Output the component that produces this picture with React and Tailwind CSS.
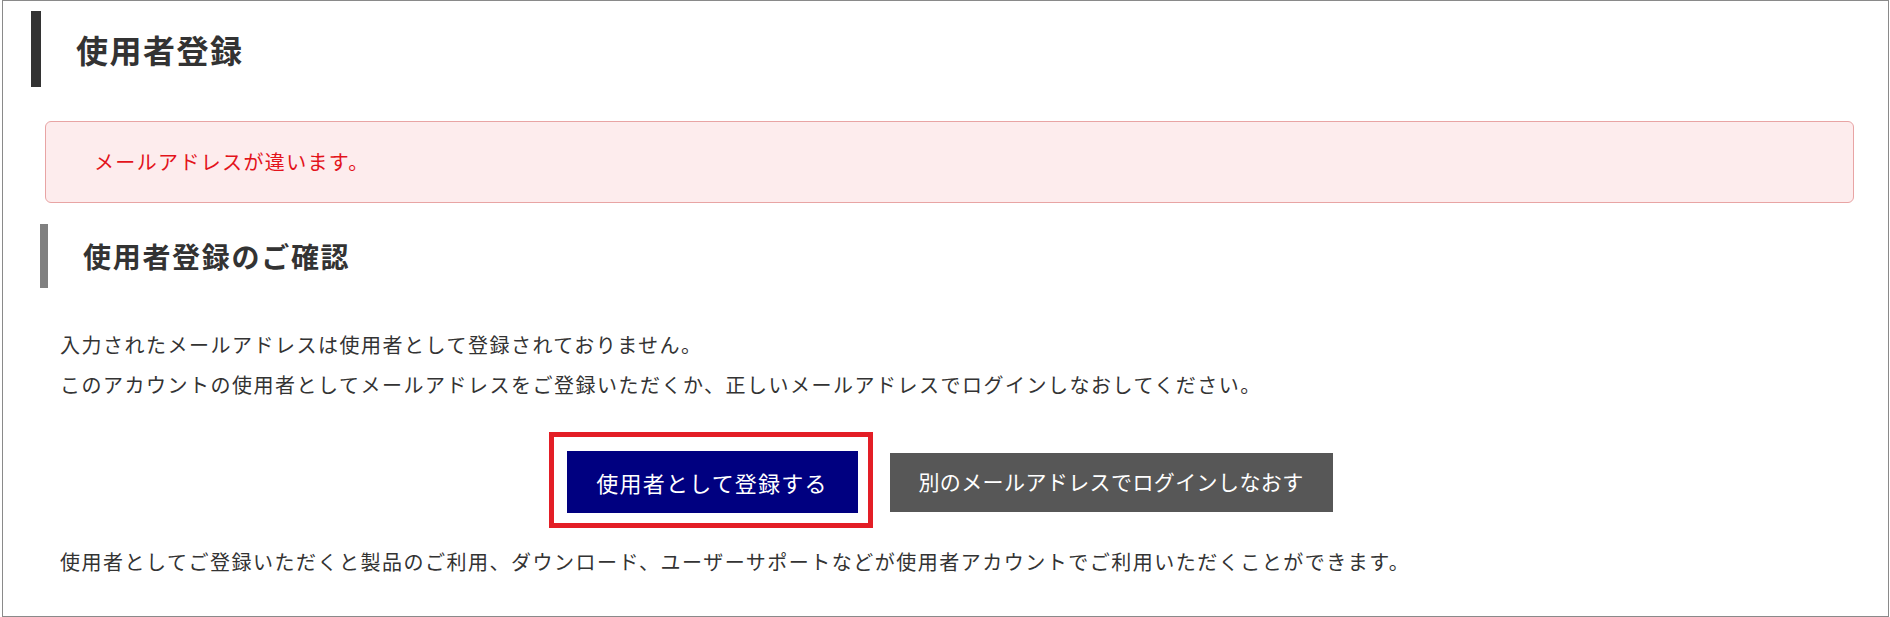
export default function App() {
  const font = { fontFamily: '"Noto Sans CJK JP", "Noto Sans", sans-serif' };
  return (
    <div className="w-[1890px] h-[617px] bg-white" style={font}>
      <div className="ml-[2px] w-[1887px] h-[617px] border border-[#8a8a8a] flex flex-col text-[#333333]">
        {/* H1 */}
        <div className="mt-[10px] ml-[28px] h-[76px] flex items-center border-l-[10px] border-[#333333] pl-[35px]">
          <h1 className="text-[32px] font-bold tracking-[1.5px] leading-none text-[#333333]">使用者登録</h1>
        </div>

        {/* Alert */}
        <div className="mt-[34px] ml-[42px] mr-[34px] h-[82px] flex items-center rounded-[6px] border border-[#e8a4a4] bg-[#fdeced] pl-[48px]">
          <p className="text-[20px] tracking-[1.35px] leading-none text-[#e3131b]">メールアドレスが違います。</p>
        </div>

        {/* H2 */}
        <div className="mt-[21px] ml-[37px] h-[64px] flex items-center border-l-[8px] border-[#808080] pl-[35px]">
          <h2 className="text-[28px] font-bold tracking-[1.7px] leading-none text-[#333333]">使用者登録のご確認</h2>
        </div>

        {/* Body */}
        <div className="mt-[37px] ml-[57px] text-[20px] leading-[40px] tracking-[1.5px] text-[#333333]">
          <p>入力されたメールアドレスは使用者として登録されておりません。</p>
          <p>このアカウントの使用者としてメールアドレスをご登録いただくか、正しいメールアドレスでログインしなおしてください。</p>
        </div>

        {/* Buttons */}
        <div className="mt-[46px] flex items-center justify-center gap-[32px] pl-[8px]">
          <div className="relative">
            <button className="w-[291px] h-[62px] bg-[#000080] text-white text-[22px] tracking-[1.2px] flex items-center justify-center">
              使用者として登録する
            </button>
            <div className="absolute -left-[18px] -right-[15px] -top-[19px] -bottom-[15px] border-[5px] border-[#e31e26] pointer-events-none"></div>
          </div>
          <button className="w-[443px] h-[59px] bg-[#575757] text-white text-[21px] tracking-[0.4px] flex items-center justify-center">
            別のメールアドレスでログインしなおす
          </button>
        </div>

        {/* Bottom text */}
        <div className="mt-[29px] ml-[57px] text-[20px] leading-[40px] tracking-[1.5px] text-[#333333]">
          <p>使用者としてご登録いただくと製品のご利用、ダウンロード、ユーザーサポートなどが使用者アカウントでご利用いただくことができます。</p>
        </div>
      </div>
    </div>
  );
}
